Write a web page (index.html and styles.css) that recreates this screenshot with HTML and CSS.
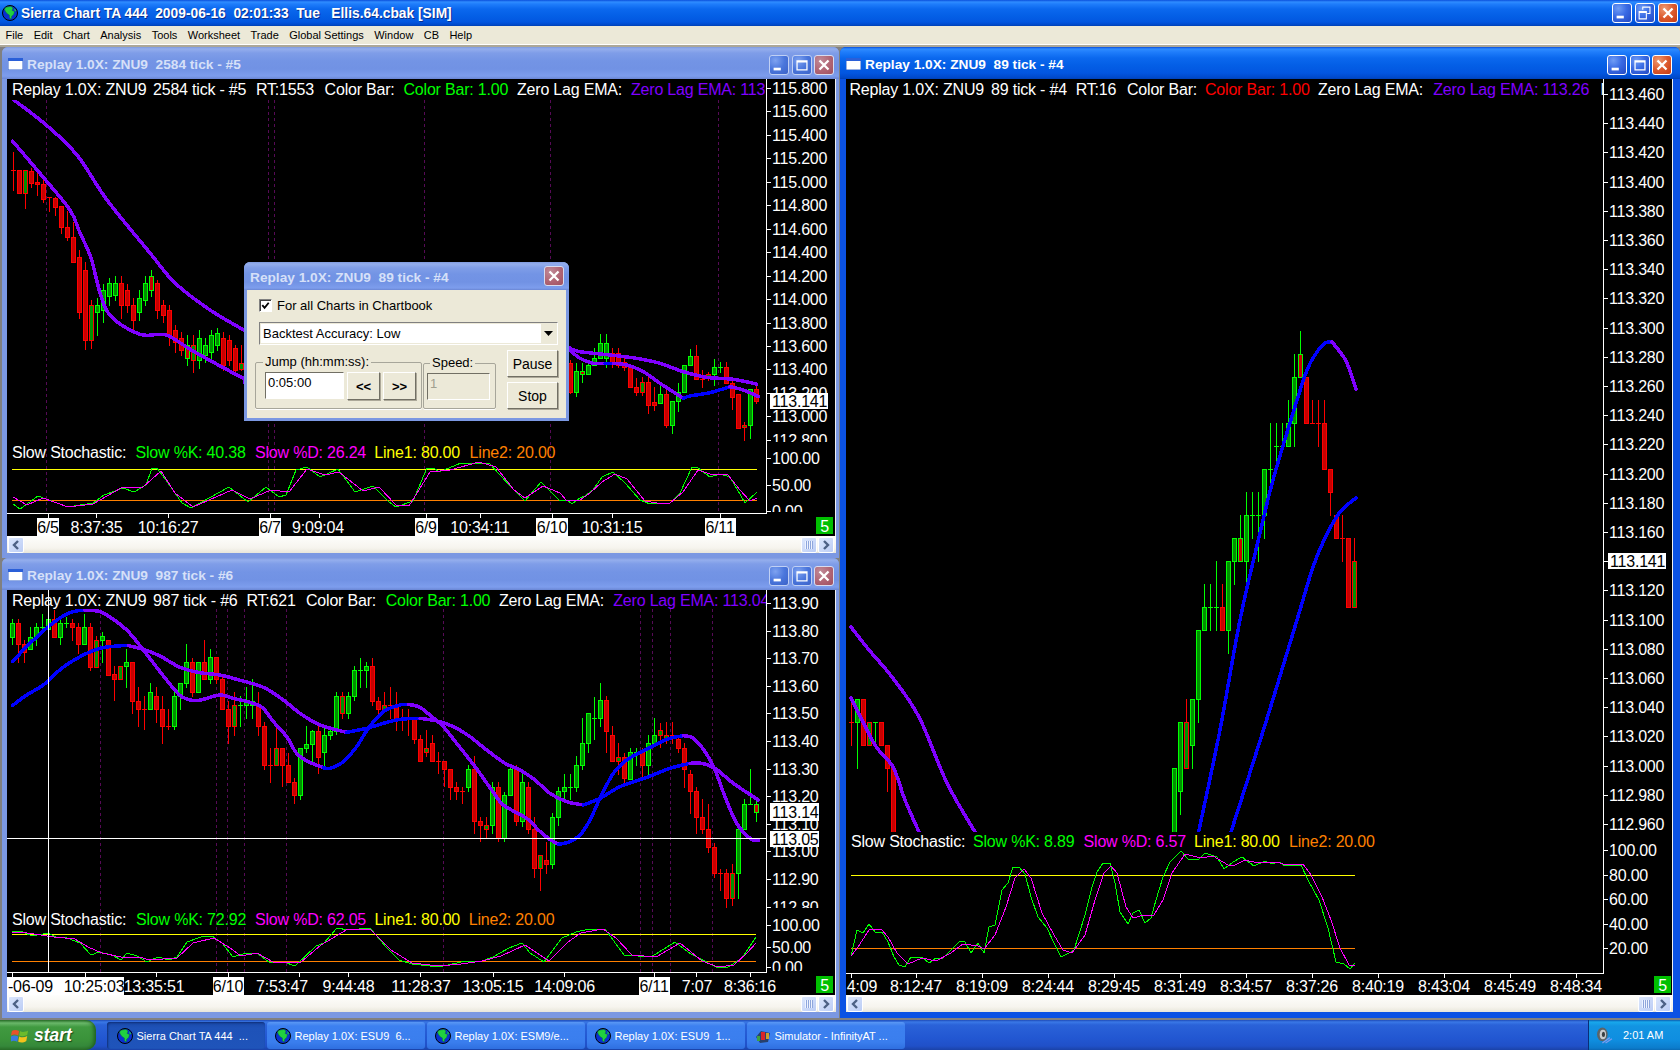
FILE: index.html
```html
<!DOCTYPE html>
<html lang="en">
<head>
<meta charset="utf-8">
<title>Sierra Chart TA 444</title>
<link rel="stylesheet" href="styles.css">
</head>
<body>
<svg class="defs" width="0" height="0" aria-hidden="true">
  <defs>
    <symbol id="globe" viewBox="0 0 16 16">
      <circle cx="8" cy="8" r="7.5" fill="#0a2fd0" stroke="#000" stroke-width="1"/>
      <path d="M4 2.2 9 1.4 11 3 10 5.5 12.5 6.5 11.6 9.4 9.6 11.2 9.2 14 7.6 13 7.4 10 5 8.6 3.2 6 2.6 4Z" fill="#20d040" stroke="#0a7a20" stroke-width=".4"/>
      <path d="M12.5 3.4 14.2 5.6 13.4 6.4 12.2 5Z" fill="#20d040"/>
    </symbol>
    <symbol id="minimize" viewBox="0 0 20 20"><rect x="4" y="13" width="8" height="3" fill="#fff"/></symbol>
    <symbol id="maximize" viewBox="0 0 20 20"><path d="M4.5 5.5h11v10h-11zM4.5 6.5h11" fill="none" stroke="#fff" stroke-width="1.4"/></symbol>
    <symbol id="restore" viewBox="0 0 20 20"><path d="M7.5 6.5V3.5h8v7h-3M3.5 8.5h8v8h-8zM3.5 9.5h8" fill="none" stroke="#fff" stroke-width="1.2"/></symbol>
    <symbol id="close" viewBox="0 0 20 20"><path d="M5 5 15 15M15 5 5 15" stroke="#fff" stroke-width="2.6" fill="none"/></symbol>
    <symbol id="docicon" viewBox="0 0 15 12"><rect width="15" height="12" fill="#fff" stroke="#3060c8"/><rect width="15" height="3" fill="#2a5fd8"/></symbol>
    <symbol id="chev-l" viewBox="0 0 14 14"><path d="M9 3 5 7 9 11" fill="none" stroke="#4d6185" stroke-width="2.4"/></symbol>
    <symbol id="chev-r" viewBox="0 0 14 14"><path d="M5 3 9 7 5 11" fill="none" stroke="#4d6185" stroke-width="2.4"/></symbol>
    <symbol id="grip" viewBox="0 0 14 14"><path d="M3.500 3v8M5.500 3v8M7.500 3v8M9.500 3v8" stroke="#eef3ff" stroke-width="1"/><path d="M4.500 3v8M6.500 3v8M8.500 3v8M10.500 3v8" stroke="#8ea6dc" stroke-width="1"/></symbol>
  </defs>
</svg>

<div class="desktop">
  <header class="apptitle">
    <svg class="appicon"><use href="#globe"/></svg>
    <span class="apptitle-text">Sierra Chart TA 444  2009-06-16  02:01:33  Tue   Ellis.64.cbak [SIM]</span>
    <div class="btns btns-app">
      <span class="xb"><svg><use href="#minimize"/></svg></span>
      <span class="xb"><svg><use href="#restore"/></svg></span>
      <span class="xb xb-close"><svg><use href="#close"/></svg></span>
    </div>
  </header>

  <nav class="menu">
    <span>File</span><span>Edit</span><span>Chart</span><span>Analysis</span><span>Tools</span><span>Worksheet</span><span>Trade</span><span>Global Settings</span><span>Window</span><span>CB</span><span>Help</span>
  </nav>

  <main class="mdi">
    <div class="leftcol">
      <section class="win win-a">
        <div class="wintitle">
          <svg class="docicon"><use href="#docicon"/></svg>
          <span class="wintitle-text">Replay 1.0X: ZNU9  2584 tick - #5</span>
          <div class="btns btns-win">
            <span class="xb"><svg><use href="#minimize"/></svg></span>
            <span class="xb"><svg><use href="#maximize"/></svg></span>
            <span class="xb xb-close"><svg><use href="#close"/></svg></span>
          </div>
        </div>
        <div class="chartwrap">
          <svg id="c1" class="chart chart-a" viewBox="7 79 828 457">
            <g class="plot"></g>
            <text class="t w" x="12" y="95">Replay 1.0X: ZNU9</text>
            <text class="t w" x="153" y="95">2584 tick - #5</text>
            <text class="t w" x="256" y="95">RT:1553</text>
            <text class="t w" x="324.600" y="95">Color Bar:</text>
            <text class="t gr" x="403.500" y="95">Color Bar: 1.00</text>
            <text class="t w" x="517" y="95">Zero Lag EMA:</text>
            <text class="t pu hdrclip" x="631" y="95">Zero Lag EMA: 113.14</text>
            <text class="t w" x="12" y="458">Slow Stochastic:</text>
            <text class="t gr" x="135.500" y="458">Slow %K: 40.38</text>
            <text class="t ma" x="255" y="458">Slow %D: 26.24</text>
            <text class="t ye" x="374.300" y="458">Line1: 80.00</text>
            <text class="t or" x="469.600" y="458">Line2: 20.00</text>
            <g class="axis"></g>
          </svg>
        </div>
        <div class="sbar">
          <span class="sb"><svg><use href="#chev-l"/></svg></span>
          <span class="sb-right"><span class="sb"><svg><use href="#grip"/></svg></span><span class="sb"><svg><use href="#chev-r"/></svg></span></span>
        </div>
      </section>

      <section class="win win-b">
        <div class="wintitle">
          <svg class="docicon"><use href="#docicon"/></svg>
          <span class="wintitle-text">Replay 1.0X: ZNU9  987 tick - #6</span>
          <div class="btns btns-win">
            <span class="xb"><svg><use href="#minimize"/></svg></span>
            <span class="xb"><svg><use href="#maximize"/></svg></span>
            <span class="xb xb-close"><svg><use href="#close"/></svg></span>
          </div>
        </div>
        <div class="chartwrap">
          <svg id="c2" class="chart chart-b" viewBox="7 590 828 405">
            <g class="plot"></g>
            <text class="t w" x="12" y="606">Replay 1.0X: ZNU9</text>
            <text class="t w" x="153" y="606">987 tick - #6</text>
            <text class="t w" x="246.400" y="606">RT:621</text>
            <text class="t w" x="306" y="606">Color Bar:</text>
            <text class="t gr" x="385.700" y="606">Color Bar: 1.00</text>
            <text class="t w" x="499" y="606">Zero Lag EMA:</text>
            <text class="t pu hdrclip" x="613.300" y="606">Zero Lag EMA: 113.04</text>
            <text class="t w" x="12" y="925">Slow Stochastic:</text>
            <text class="t gr" x="136" y="925">Slow %K: 72.92</text>
            <text class="t ma" x="255" y="925">Slow %D: 62.05</text>
            <text class="t ye" x="374.400" y="925">Line1: 80.00</text>
            <text class="t or" x="468.700" y="925">Line2: 20.00</text>
            <g class="axis"></g>
          </svg>
        </div>
        <div class="sbar">
          <span class="sb"><svg><use href="#chev-l"/></svg></span>
          <span class="sb-right"><span class="sb"><svg><use href="#grip"/></svg></span><span class="sb"><svg><use href="#chev-r"/></svg></span></span>
        </div>
      </section>
    </div>

    <section class="win win-c is-active">
      <div class="wintitle">
        <svg class="docicon"><use href="#docicon"/></svg>
        <span class="wintitle-text">Replay 1.0X: ZNU9  89 tick - #4</span>
        <div class="btns btns-win">
          <span class="xb"><svg><use href="#minimize"/></svg></span>
          <span class="xb"><svg><use href="#maximize"/></svg></span>
          <span class="xb xb-close"><svg><use href="#close"/></svg></span>
        </div>
      </div>
      <div class="chartwrap">
        <svg id="c3" class="chart chart-c" viewBox="846 79 826 916">
          <g class="plot"></g>
          <text class="t w" x="849.500" y="95">Replay 1.0X: ZNU9</text>
          <text class="t w" x="991" y="95">89 tick - #4</text>
          <text class="t w" x="1075.700" y="95">RT:16</text>
          <text class="t w" x="1127" y="95">Color Bar:</text>
          <text class="t re" x="1205" y="95">Color Bar: 1.00</text>
          <text class="t w" x="1318" y="95">Zero Lag EMA:</text>
          <text class="t pu" x="1433.300" y="95">Zero Lag EMA: 113.26</text>
          <text class="t w hdrclip" x="1600.500" y="95">M</text>
          <text class="t w" x="851" y="847">Slow Stochastic:</text>
          <text class="t gr" x="973" y="847">Slow %K: 8.89</text>
          <text class="t ma" x="1083.600" y="847">Slow %D: 6.57</text>
          <text class="t ye" x="1194" y="847">Line1: 80.00</text>
          <text class="t or" x="1289" y="847">Line2: 20.00</text>
          <g class="axis"></g>
        </svg>
      </div>
      <div class="sbar">
        <span class="sb"><svg><use href="#chev-l"/></svg></span>
        <span class="sb-right"><span class="sb"><svg><use href="#grip"/></svg></span><span class="sb"><svg><use href="#chev-r"/></svg></span></span>
      </div>
    </section>
  </main>

  <footer class="taskbar">
    <div class="start">
      <svg class="flag" viewBox="0 0 20 18">
        <path d="M1 4C3 2.500 6 2.500 9 4L8 9C5 7.500 3 7.500 0 9Z" fill="#e8522a"/>
        <path d="M10 4C12 5.500 15 5.500 19 3.500L18 8.500C15 10 12 10 9 9Z" fill="#6cbb2c"/>
        <path d="M0 10C3 8.500 5 8.500 8 10L7 16C4 14.500 2 14.500 -1 16Z" fill="#3a7ae0"/>
        <path d="M9 10C12 11.500 15 11.500 18 9.500L17 15C14 17 11 17 8 16Z" fill="#f4c21c"/>
      </svg>
      <span class="start-text">start</span>
    </div>
    <div class="tasks">
      <div class="task is-on"><svg class="taskicon"><use href="#globe"/></svg><span>Sierra Chart TA 444  ...</span></div>
      <div class="task"><svg class="taskicon"><use href="#globe"/></svg><span>Replay 1.0X: ESU9  6...</span></div>
      <div class="task"><svg class="taskicon"><use href="#globe"/></svg><span>Replay 1.0X: ESM9/e...</span></div>
      <div class="task"><svg class="taskicon"><use href="#globe"/></svg><span>Replay 1.0X: ESU9  1...</span></div>
      <div class="task">
        <svg class="taskicon" viewBox="0 0 16 16">
          <path d="M1 9 6 3l9 2-2 9-8 1Z" fill="#27406e"/>
          <path d="M6 4h4v8H6Z" fill="#d8242a"/>
          <path d="M2 8h3v5H2Z" fill="#3ca040"/>
          <path d="M11 5h3v6h-3Z" fill="#c8a030"/>
        </svg>
        <span>Simulator - InfinityAT ...</span>
      </div>
    </div>
    <div class="tray">
      <svg class="speaker" viewBox="0 0 16 16">
        <ellipse cx="6" cy="7" rx="5" ry="6.500" fill="#5c6468"/>
        <ellipse cx="6.500" cy="7" rx="3" ry="4.500" fill="#c8ccd0"/>
        <ellipse cx="7" cy="7" rx="1.500" ry="2.500" fill="#3a4044"/>
        <path d="M6 15 13 10M9 15 15 11" stroke="#7c9cf0" stroke-width="1.200" fill="none"/>
      </svg>
      <span class="clock">2:01 AM</span>
    </div>
  </footer>

  <aside class="dialog">
    <div class="dlg-title">
      <span class="dlg-title-text">Replay 1.0X: ZNU9  89 tick - #4</span>
      <span class="xb xb-close"><svg><use href="#close"/></svg></span>
    </div>
    <div class="dlg-body">
      <div class="dlg-check">
        <span class="checkbox"><svg viewBox="0 0 12 12"><path d="M2.500 5.500 5 8.500 9.500 3" fill="none" stroke="#000" stroke-width="2"/></svg></span>
        <span>For all Charts in Chartbook</span>
      </div>
      <div class="dlg-select">
        <span class="dlg-select-text">Backtest Accuracy: Low</span>
        <span class="dlg-arrow"><svg viewBox="0 0 9 5"><path d="M0 0h9L4.500 5Z" fill="#000"/></svg></span>
      </div>
      <div class="dlg-row">
        <fieldset class="grp grp-jump">
          <legend>Jump (hh:mm:ss):</legend>
          <div class="field">0:05:00</div>
          <button class="btn btn-nav">&lt;&lt;</button>
          <button class="btn btn-nav">&gt;&gt;</button>
        </fieldset>
        <fieldset class="grp grp-speed">
          <legend>Speed:</legend>
          <div class="field field-off">1</div>
        </fieldset>
        <div class="dlg-actions">
          <button class="btn btn-act">Pause</button>
          <button class="btn btn-act">Stop</button>
        </div>
      </div>
    </div>
  </aside>
</div>
<script src="chart.js"></script>
</body>
</html>
```
FILE: styles.css
```css
* { box-sizing: border-box; }
html, body { margin: 0; padding: 0; background: #808080; }
body { font-family: "Liberation Sans", Arial, sans-serif; overflow: hidden; }
.defs { position: absolute; }

.desktop { position: relative; width: 1680px; height: 1050px; display: flex; flex-direction: column; overflow: hidden; }

/* ---------- XP caption ---------- */
.apptitle {
  height: 26px; flex: none; display: flex; align-items: center; padding: 0 2px;
  background: linear-gradient(#0a4fdc 0, #2f8cff 2px, #1f7dfb 4px, #0b68ee 9px, #045fe6 16px, #0256e0 22px, #0048c8 25px, #0040b0 26px);
}
.appicon { width: 16px; height: 16px; flex: none; }
.apptitle-text { margin-left: 3px; color: #fff; font-weight: bold; font-size: 13.800px; white-space: pre; text-shadow: 1px 1px 0 #0a2f90; }
.btns { margin-left: auto; display: flex; }
.btns-app { gap: 3px; }
.btns-win { gap: 2.500px; margin-top: 3px; padding-right: 5px; }
.xb {
  width: 20px; height: 20px; display: block; border: 1px solid #fff; border-radius: 3px; flex: none;
  background: radial-gradient(circle at 30% 25%, #6f9cf5 0, #3a6be4 45%, #2349c4 100%);
}
.xb svg { display: block; width: 100%; height: 100%; }
.xb-close { background: radial-gradient(circle at 30% 25%, #ee9a72 0, #dc5a2e 50%, #c43a14 100%); }

.menu {
  height: 21px; flex: none; display: flex; align-items: center; gap: 10.400px; padding: 0 0 1px 5.500px;
  background: #ece9d8; font-size: 11px; color: #000; border-bottom: 2px solid #aca899; box-shadow: inset 0 -1px 0 #fff;
}

/* ---------- MDI ---------- */
.mdi { flex: none; height: 973px; display: flex; }
.leftcol { width: 840px; flex: none; display: flex; flex-direction: column; padding-left: 2px; }
.win { display: flex; flex-direction: column; border-radius: 6px 6px 0 0; background: #7b98e2; }
.wintitle {
  height: 32px; flex: none; display: flex; align-items: center; padding-left: 6px; border-radius: 6px 6px 0 0;
  background: linear-gradient(#7f9bdf 0, #94aeed 2px, #7f9de8 6px, #7394e5 14px, #7192e4 22px, #7d9ded 29px, #6a86d4 32px);
}
.docicon { width: 15px; height: 12px; flex: none; margin-top: 2px; }
.wintitle-text { margin: 2px 0 0 4px; color: #d6e0f8; font-weight: bold; font-size: 13.700px; white-space: pre; }
.win-a, .win-b { width: 837px; border-left: 5px solid #7b98e2; border-right: 3px solid #7b98e2; }
.win-a { height: 511px; margin-bottom: 0; }
.win-b { height: 460px; }
.win-a .wintitle, .win-b .wintitle { margin-left: -5px; margin-right: -3px; }
.win-a .btns-win, .win-b .btns-win { padding-right: 5px; }
.win-c {
  width: 840px; height: 971px; border-left: 6px solid #0b52e4; border-right: 7px solid #0b52e4; border-bottom: 6px solid #0b52e4; background: #0b52e4;
}
.win-c .wintitle {
  margin-left: -6px; margin-right: -7px;
  background: linear-gradient(#0a4fdc 0, #2f8cff 2px, #1f7dfb 5px, #0b68ee 11px, #045fe6 18px, #0256e0 26px, #0048c8 31px, #0040b0 32px);
}
.win-c .wintitle-text { color: #fff; }
.win-c .btns-win { padding-right: 8px; gap: 2.500px; }
.win-c .wintitle, .win-a .wintitle, .win-b .wintitle { position: relative; }

.win-a .xb, .win-b .xb { background: radial-gradient(circle at 30% 25%, #7ea2f0 0, #4a76dc 50%, #3c62c8 100%); border-color: #c0d0f4; }
.win-a .xb-close, .win-b .xb-close, .dialog .xb-close { background: radial-gradient(circle at 30% 25%, #c08a98 0, #b06474 55%, #a0505f 100%); border-color: #d8dcf0; }

.chartwrap { flex: none; background: #000; border-right: 1px solid #f0f0f0; }
.chart { display: block; background: #000; }
.chart-a { width: 828px; height: 457px; }
.chart-b { width: 828px; height: 405px; }
.chart-c { width: 826px; height: 916px; }

.sbar {
  height: 17px; flex: none; display: flex; justify-content: space-between; align-items: center; padding: 0 2px 0 1px;
  background: linear-gradient(#fefefc, #f6f4ee 70%, #e8e6da);
}
.sb-right { display: flex; gap: 1px; }
.sb { width: 16px; height: 16px; display: block; border: 1px solid #fff; border-radius: 2px; background: linear-gradient(135deg, #dbe6fc, #bccdf5); }
.sb svg { display: block; width: 100%; height: 100%; }

/* ---------- chart drawing ---------- */
.plot, .axis line, .axis rect { shape-rendering: crispEdges; }
.t { font-family: "Liberation Sans", Arial, sans-serif; font-size: 16px; letter-spacing: -.2px; white-space: pre; }
.w { fill: #fff; } .gr { fill: #00ff00; } .re { fill: #ff0000; } .pu { fill: #8000ff; } .ma { fill: #ff00ff; } .ye { fill: #ffff00; } .or { fill: #ff8000; } .k { fill: #000; }
.mid { text-anchor: middle; }
.vd { stroke: #560a56; stroke-width: 1; stroke-dasharray: 3 3; }
.ax { stroke: #fff; stroke-width: 1; }
.bx { fill: #fff; }
.badge { fill: #00c000; }
.cs-g { stroke: #00ff00; } .cs-r { stroke: #ff0000; }
.cf-g { fill: #009000; } .cf-r { fill: #c80000; }
.ma-p, .ma-b { fill: none; stroke-width: 3.500; stroke-linecap: round; stroke-linejoin: round; }
.ma-p { stroke: #8000ff; } .ma-b { stroke: #0000ff; }
.st-g, .st-m { fill: none; stroke-width: 1; }
.st-g { stroke: #00ff00; } .st-m { stroke: #ff00ff; }
.lvl-y { stroke: #ffff00; } .lvl-o { stroke: #ff8000; }
.xh { stroke: #fff; stroke-width: 1; }

/* ---------- taskbar ---------- */
.taskbar {
  height: 30px; flex: none; display: flex; align-items: stretch;
  background: linear-gradient(#1f4bb8 0, #3a78e6 2px, #2a62d8 5px, #2257d2 18px, #2050c8 26px, #1a42a8 30px);
}
.start {
  width: 96px; flex: none; display: flex; align-items: center; padding-left: 11px; gap: 5px; border-radius: 0 10px 10px 0;
  background: linear-gradient(#2a702a 0, #6ab86a 3px, #409a40 7px, #3a923a 20px, #35883a 26px, #2a702a 30px);
  box-shadow: inset -4px 0 4px -2px #1c5a1c;
}
.flag { width: 18px; height: 17px; flex: none; }
.start-text { color: #fff; font-style: italic; font-weight: bold; font-size: 17.500px; text-shadow: 1px 1px 1px #1a4a1a; }
.tasks { display: flex; gap: 2px; margin-left: 10.500px; }
.task {
  width: 158px; margin: 2px 0 1px; display: flex; align-items: center; padding-left: 8px; gap: 4px; border-radius: 3px;
  color: #fff; font-size: 11px; white-space: pre;
  background: linear-gradient(#5a98f4 0, #3c80f0 4px, #3a7eee 20px, #2f6fe0 27px);
}
.task.is-on { padding-left: 10px; background: linear-gradient(#1a48a8, #1e52b8 6px, #1f54ba); box-shadow: inset 1px 1px 2px #0f2f78; }
.taskicon { width: 16px; height: 16px; flex: none; }
.tray {
  margin-left: auto; width: 92px; flex: none; display: flex; align-items: center; padding-left: 7px; gap: 10px;
  border-left: 1px solid #092e78; color: #fff; font-size: 11px;
  background: linear-gradient(#0c5eb0 0, #18a8ec 2px, #1294e2 6px, #0f8ee0 20px, #0c7ccc 28px, #0a6ab4 30px);
}
.speaker { width: 17px; height: 17px; flex: none; }

/* ---------- replay dialog (floats above the charts) ---------- */
.dialog {
  position: absolute; left: 244px; top: 262px; width: 325px; height: 159px; display: flex; flex-direction: column;
  border: 3px solid #7b98e2; border-top: 0; border-radius: 6px 6px 0 0; background: #ece9d8; color: #000; font-size: 13px;
}
.dlg-title {
  height: 28px; margin: 0 -3px; flex: none; display: flex; align-items: center; justify-content: space-between; padding: 0 5px 0 6px; border-radius: 6px 6px 0 0;
  background: linear-gradient(#7f9bdf 0, #94aeed 2px, #7f9de8 6px, #7394e5 12px, #7192e4 20px, #7d9ded 26px, #6a86d4 28px);
}
.dlg-title-text { margin-top: 2px; color: #d6e0f8; font-weight: bold; font-size: 13.700px; white-space: pre; }
.dlg-body { flex: 1; padding: 9px 8px 0 12px; display: flex; flex-direction: column; }
.dlg-check { display: flex; align-items: center; height: 13px; gap: 5px; }
.checkbox { width: 13px; height: 13px; display: block; background: #fff; border: 1px solid; border-color: #808080 #fff #fff #808080; box-shadow: inset 1px 1px 0 #404040; }
.checkbox svg { display: block; width: 11px; height: 11px; }
.dlg-select {
  margin-top: 10px; height: 23px; display: flex; align-items: center; justify-content: space-between; background: #fff; padding-left: 3px;
  border: 1px solid; border-color: #808080 #fff #fff #808080; outline: 1px solid #ece9d8; outline-offset: -2px;
}
.dlg-select-text { font-size: 13px; }
.dlg-arrow { width: 17px; height: 21px; display: flex; align-items: center; justify-content: center; background: #ece9d8; border: 1px solid; border-color: #fff #716f64 #716f64 #fff; }
.dlg-arrow svg { width: 9px; height: 5px; }
.dlg-row { margin: 5px 0 0 -4px; display: flex; align-items: flex-end; }
.grp { margin: 0; padding: 2px 5px 8px 9px; border: 1px solid #a7a69a; border-radius: 2px; display: flex; align-items: flex-start; box-shadow: 0 1px 0 #fff; }
.grp legend { padding: 0 2px; margin-left: -2px; font-size: 13px; line-height: 16px; color: #000; }
.grp-jump { width: 167px; gap: 3px; }
.grp-speed { width: 74px; margin-left: 1px; padding-left: 3px; }
.grp-speed legend { margin-left: 3px; }
.field { width: 79px; height: 27px; padding: 2px 2px; background: #fff; font-size: 13px; border: 1px solid; border-color: #716f64 #fff #fff #716f64; }
.field-off { width: 63px; background: #ece9d8; color: #a0a090; }
.btn { margin: 0; padding: 0; font-family: "Liberation Sans", Arial, sans-serif; font-size: 13px; color: #000; background: #ece9d8; border: 1px solid; border-color: #fff #716f64 #716f64 #fff; box-shadow: 1px 1px 0 #aca899; cursor: default; }
.btn-nav { width: 33px; height: 28px; font-weight: bold; }
.dlg-actions { margin-left: 11px; display: flex; flex-direction: column; gap: 5px; }
.btn-act { width: 51px; height: 27px; font-size: 14px; }
```
FILE: chart.js
```js
const NS = "http://www.w3.org/2000/svg";
function el(p, n, a, txt) {
  const e = document.createElementNS(NS, n);
  for (const k in a) e.setAttribute(k, a[k]);
  if (txt !== undefined) e.textContent = txt;
  p.appendChild(e);
  return e;
}
function line(p, x1, y1, x2, y2, cls) { return el(p, "line", { x1, y1, x2, y2, class: cls }); }
function clip(svg, id, x, y, w, h) {
  const c = el(svg, "clipPath", { id });
  el(c, "rect", { x, y, width: w, height: h });
  return "url(#" + id + ")";
}
function smooth(pts) {
  let d = "M" + pts[0][0] + " " + pts[0][1];
  for (let i = 0; i < pts.length - 1; i++) {
    const p0 = pts[i - 1] || pts[i], p1 = pts[i], p2 = pts[i + 1], p3 = pts[i + 2] || p2;
    d += "C" + (p1[0] + (p2[0] - p0[0]) / 6) + " " + (p1[1] + (p2[1] - p0[1]) / 6) + " " +
      (p2[0] - (p3[0] - p1[0]) / 6) + " " + (p2[1] - (p3[1] - p1[1]) / 6) + " " + p2[0] + " " + p2[1];
  }
  return d;
}
function curve(g, pts, cls) { el(g, "path", { d: smooth(pts), class: cls }); }
function poly(g, pts, cls) { el(g, "polyline", { points: pts.map(p => p.join(",")).join(" "), class: cls }); }

/* type: G green, R red, r red outline with green body, g green outline with red body */
function candle(g, x, c) {
  const type = c[0], top = c[1], bot = c[2];
  const wt = c[3] === undefined ? top : c[3], wb = c[4] === undefined ? bot : c[4];
  const out = (type === "G" || type === "g") ? "cs-g" : "cs-r";
  const fill = (type === "G" || type === "r") ? "cf-g" : "cf-r";
  const X = Math.round(x), Y0 = Math.round(top), Y1 = Math.round(bot);
  if (Math.round(wt) !== Math.round(wb)) line(g, X + .5, Math.round(wt), X + .5, Math.round(wb) + 1, out);
  if (Y0 === Y1) line(g, X - 2, Y0 + .5, X + 3, Y0 + .5, out);
  else el(g, "rect", { x: X - 1.5, y: Y0 + .5, width: 4, height: Y1 - Y0, class: out + " " + fill });
}

function axis(svg, g, o) {
  o.prices.forEach(p => {
    line(g, o.ax + 1, p[0] + .5, o.ax + 5, p[0] + .5, "ax");
  });
  const gp = el(g, "g", { "clip-path": clip(svg, svg.id + "pl", o.ax, o.top, 70, o.splitY - o.top) });
  o.prices.forEach(p => el(gp, "text", { x: o.lx, y: p[0] + 6, class: "t w" }, p[1]));
  const gs = el(g, "g", { "clip-path": clip(svg, svg.id + "sl", o.ax, o.splitY, 70, o.axisY - o.splitY - 1) });
  o.stoch.forEach(p => {
    el(gs, "text", { x: o.lx, y: p[0] + 6, class: "t w" }, p[1]);
    line(g, o.ax + 1, p[0] + .5, o.ax + 5, p[0] + .5, "ax");
  });
  line(g, o.ax + .5, o.top, o.ax + .5, o.axisY + 1, "ax");
  line(g, o.left, o.axisY + .5, o.ax + 1, o.axisY + .5, "ax");
  o.ticks.forEach(x => line(g, x + .5, o.axisY, x + .5, o.axisY + 5, "ax"));
  o.times.forEach(t => {
    if (t[2]) {
      el(g, "rect", { x: t[2], y: o.axisY + 5, width: t[3] - t[2], height: o.bottom - o.axisY - 5, class: "bx" });
      el(g, "text", { x: t[0], y: o.labelY, class: "t k mid" }, t[1]);
    } else el(g, "text", { x: t[0], y: o.labelY, class: "t w mid" }, t[1]);
  });
  (o.boxes || []).forEach(b => {
    el(g, "rect", { x: b[0], y: b[1], width: b[2], height: b[3], class: "bx" });
    el(g, "text", { x: b[0] + 2, y: b[1] + b[3] / 2 + 6, class: "t k" }, b[4]);
  });
  el(g, "rect", { x: o.badge[0], y: o.badge[1], width: 17, height: 17, class: "badge" });
  el(g, "text", { x: o.badge[0] + 8.5, y: o.badge[1] + 14.500, class: "t w mid" }, "5");
}
function labelRun(y0, step, start, delta, n, digits) {
  const r = [];
  for (let i = 0; i < n; i++) r.push([Math.round(y0 + step * i), (start - delta * i).toFixed(digits)]);
  return r;
}

/* ========== chart 1 : 2584 tick ========== */
(function () {
  const svg = document.getElementById("c1");
  const plot = svg.querySelector(".plot"), ax = svg.querySelector(".axis");
  const hdr = clip(svg, "c1h", 7, 79, 759, 30);
  svg.querySelectorAll(".hdrclip").forEach(t => t.setAttribute("clip-path", hdr));
  const mc = clip(svg, "c1m", 7, 100, 759, 341);
  const sc = clip(svg, "c1s", 7, 441, 759, 72);
  [46, 268, 274, 424, 550, 718].forEach(x => line(plot, x + .5, 100, x + .5, 513, "vd"));
  const gm = el(plot, "g", { "clip-path": mc });
  const left = [
    ["R", 170, 170, 152, 190], ["R", 170, 193], ["r", 170, 193, 170, 208], ["R", 171, 183, 168, 187], ["R", 182, 184, 173, 195],
    ["R", 184, 199, 180, 202], ["R", 197, 197, 197, 211], ["R", 198, 207, 197, 215], ["R", 206, 227, 206, 233], ["R", 227, 237, 211, 240],
    ["R", 237, 262, 222, 262], ["R", 257, 312, 250, 318], ["R", 270, 340, 262, 349], ["r", 305, 340, 300, 348], ["G", 305, 312, 298, 335],
    ["G", 290, 310, 284, 322], ["G", 283, 296, 278, 305], ["G", 283, 295, 276, 300], ["R", 283, 305, 276, 318], ["R", 290, 305, 284, 312],
    ["R", 305, 320, 298, 330], ["G", 298, 312, 290, 320], ["G", 283, 300, 276, 305], ["g", 276, 290, 270, 296], ["R", 283, 310, 280, 318],
    ["R", 305, 315, 300, 322], ["R", 310, 335, 305, 345], ["R", 330, 342, 325, 352], ["R", 338, 350, 332, 355], ["g", 345, 358, 335, 365],
    ["r", 345, 360, 335, 372], ["G", 338, 360, 330, 368], ["G", 345, 355, 338, 362], ["G", 335, 352, 330, 358], ["G", 333, 345, 328, 350],
    ["R", 338, 365, 332, 370], ["R", 340, 360, 335, 365], ["R", 348, 370, 345, 372], ["r", 363, 369, 345, 370]
  ];
  left.forEach((c, i) => candle(gm, 12.9 + 6 * i, c));
  const z = v => 330 + v / 3;
  const right = [
    ["R", 100, 185, 90, 190], ["G", 122, 185, 100, 197], ["g", 122, 133, 98, 157], ["G", 106, 133, 98, 133], ["G", 85, 106, 55, 106], ["G", 40, 85, 12, 85], ["G", 40, 85, 12, 110],
    ["R", 68, 100, 55, 110], ["R", 68, 106, 55, 112], ["R", 95, 112, 75, 120], ["R", 112, 172, 112, 172], ["R", 172, 185, 145, 195], ["r", 155, 185, 140, 195],
    ["R", 155, 225, 140, 248], ["R", 216, 226, 172, 240], ["G", 192, 218, 165, 218], ["R", 192, 285, 165, 290], ["G", 212, 285, 212, 308], ["G", 185, 212, 158, 242],
    ["G", 106, 185, 106, 185], ["G", 78, 106, 58, 106], ["R", 78, 146, 45, 146], ["R", 146, 146, 120, 170], ["r", 133, 140, 125, 150], ["G", 112, 133, 88, 165],
    ["G", 112, 112, 95, 125], ["R", 112, 160, 95, 160], ["R", 160, 200, 150, 236], ["R", 192, 293, 192, 293], ["r", 284, 292, 276, 330], ["G", 178, 284, 178, 324], ["R", 178, 212, 155, 218]
  ];
  right.forEach((c, i) => candle(gm, 570 + 6 * i, [c[0], z(c[1]), z(c[2]), z(c[3]), z(c[4])]));
  const zp = a => [560 + a[0] / 3, 330 + a[1] / 3];
  curve(gm, [[12.5, 99], [45, 124], [77, 155], [107, 200], [150, 253], [175, 283], [210, 310], [244, 330], [260, 338], [400, 340], [570, 348]], "ma-p");
  curve(gm, [[12.5, 141], [43, 177], [70, 210], [80, 233], [91, 258], [107, 311], [139, 334], [166, 335], [193, 351], [241, 377], [260, 385], [400, 380], [540, 345], [570, 348]], "ma-p");
  curve(gm, [[30, 55], [60, 65], [150, 75], [230, 85], [300, 100], [370, 125], [440, 142], [520, 148], [590, 162]].map(zp), "ma-p");
  curve(gm, [[30, 60], [60, 85], [100, 100], [135, 100]].map(zp), "ma-p");
  curve(gm, [[135, 100], [160, 100]].map(zp), "ma-b");
  curve(gm, [[160, 100], [200, 105], [250, 125], [300, 160], [370, 205]].map(zp), "ma-p");
  curve(gm, [[370, 205], [390, 198], [450, 188], [510, 170]].map(zp), "ma-b");
  curve(gm, [[510, 170], [550, 180], [595, 200]].map(zp), "ma-p");
  const gs = el(plot, "g", { "clip-path": sc });
  line(gs, 12, 469.5, 757, 469.5, "lvl-y");
  line(gs, 12, 500.5, 757, 500.5, "lvl-o");
  const s3 = a => [Math.round(a[0] / 2.8), Math.round(430 + a[1] / 3)];
  const s4 = a => [Math.round(560 + a[0] / 3), Math.round(330 + a[1] / 3)];
  poly(gs, [[35, 222], [55, 238], [105, 197], [130, 208], [190, 230], [260, 220], [290, 195], [345, 173], [375, 185], [410, 165], [425, 115], [440, 115], [470, 160], [510, 220], [535, 235], [640, 170], [695, 217], [745, 170], [780, 200], [800, 195], [830, 120], [860, 110], [895, 142], [945, 118], [995, 187], [1045, 167], [1090, 215], [1110, 232], [1155, 212], [1195, 113], [1215, 113], [1230, 127], [1290, 98], [1370, 98], [1430, 170], [1470, 213], [1515, 155], [1568, 212]].map(s3)
    .concat([[20, 510], [35, 522], [60, 505], [75, 497], [100, 480], [125, 440], [160, 427], [195, 460], [240, 510], [270, 522], [330, 518], [360, 490], [395, 412], [415, 415], [450, 440], [480, 432], [510, 440], [555, 518], [590, 485]].map(s4)), "st-g");
  poly(gs, [[35, 200], [75, 225], [120, 205], [190, 230], [260, 222], [340, 175], [400, 172], [450, 123], [490, 190], [540, 232], [650, 180], [700, 208], [760, 180], [810, 185], [860, 118], [910, 135], [950, 125], [1015, 182], [1060, 172], [1110, 225], [1145, 228], [1205, 125], [1260, 120], [1340, 95], [1390, 110], [1440, 180], [1470, 205], [1520, 168], [1568, 190]].map(s3)
    .concat([[20, 512], [60, 510], [90, 490], [125, 455], [165, 432], [200, 448], [255, 512], [290, 520], [330, 520], [370, 485], [415, 420], [450, 432], [505, 435], [540, 480], [570, 512], [590, 503]].map(s4)), "st-m");
  axis(svg, ax, {
    ax: 766, lx: 772, top: 79, splitY: 442, axisY: 513, left: 7, bottom: 536, labelY: 533,
    prices: labelRun(88, 23.45, 115.8, .2, 16, 3),
    stoch: [[458, "100.00"], [485, "50.00"], [511, "0.00"]],
    ticks: [48, 96, 168, 270, 319, 426, 480, 552, 612, 720],
    times: [[48, "6/5", 37, 59], [96.5, "8:37:35"], [168, "10:16:27"], [270, "6/7", 259, 281], [318, "9:09:04"], [426, "6/9", 415, 437.5], [480, "10:34:11"], [552, "6/10", 536, 568], [612, "10:31:15"], [720, "6/11", 705, 736]],
    boxes: [[770, 393, 58, 16, "113.141"]],
    badge: [816, 517]
  });
})();

/* ========== chart 2 : 987 tick ========== */
(function () {
  const svg = document.getElementById("c2");
  const plot = svg.querySelector(".plot"), ax = svg.querySelector(".axis");
  const hdr = clip(svg, "c2h", 7, 590, 759, 30);
  svg.querySelectorAll(".hdrclip").forEach(t => t.setAttribute("clip-path", hdr));
  const mc = clip(svg, "c2m", 7, 609, 759, 299);
  const sc = clip(svg, "c2s", 7, 908, 759, 64);
  [100, 216, 227, 244, 286, 443, 640, 652, 670, 712].forEach(x => line(plot, x + .5, 609, x + .5, 972, "vd"));
  const gm = el(plot, "g", { "clip-path": mc });
  const data = [
    ["G", 100, 140, 88, 162], ["R", 100, 163, 88, 215], ["R", 163, 187, 150, 215], ["G", 140, 178, 112, 178], ["G", 112, 140, 100, 165], ["G", 112, 112, 72, 130], ["G", 88, 118, 72, 130], ["R", 88, 140, 60, 140], ["G", 100, 140, 88, 162], ["G", 100, 100, 82, 112],
    ["R", 100, 112, 88, 150], ["R", 112, 163, 100, 188], ["G", 112, 163, 72, 163], ["R", 112, 230, 100, 240], ["r", 150, 230, 138, 230], ["G", 139, 151, 125, 215], ["R", 151, 254, 151, 254], ["R", 253, 268, 228, 330], ["r", 229, 268, 229, 268], ["G", 217, 229, 178, 290],
    ["R", 217, 332, 217, 370], ["R", 332, 358, 292, 408], ["R", 358, 358, 318, 418], ["G", 307, 358, 280, 358], ["R", 319, 358, 292, 396], ["R", 358, 409, 319, 458], ["R", 409, 409, 358, 418], ["G", 319, 409, 305, 418], ["G", 280, 319, 280, 356], ["G", 217, 280, 163, 292],
    ["R", 217, 307, 203, 318], ["G", 217, 307, 217, 307], ["R", 217, 268, 150, 268], ["G", 202, 268, 178, 280], ["R", 202, 268, 202, 280], ["R", 268, 358, 255, 358], ["R", 358, 409, 332, 458], ["r", 346, 409, 307, 434], ["G", 346, 346, 318, 408], ["G", 332, 346, 292, 384],
    ["G", 332, 346, 268, 384], ["R", 346, 409, 306, 434], ["R", 409, 526, 395, 536], ["R", 526, 526, 475, 575], ["r", 475, 526, 408, 526], ["R", 475, 526, 475, 587], ["R", 526, 577, 488, 577], ["R", 577, 616, 565, 640], ["G", 475, 616, 475, 626], ["G", 461, 475, 408, 486],
    ["G", 422, 461, 420, 512], ["R", 422, 500, 408, 550], ["G", 436, 487, 408, 524], ["G", 422, 436, 408, 448], ["G", 319, 422, 306, 432], ["r", 319, 370, 306, 384], ["G", 319, 370, 306, 384], ["G", 241, 319, 228, 330], ["G", 241, 241, 203, 290], ["G", 229, 241, 216, 290],
    ["R", 229, 332, 203, 344], ["R", 332, 358, 320, 370], ["r", 346, 358, 306, 358], ["R", 346, 346, 292, 384], ["R", 346, 385, 306, 420], ["R", 384, 384, 358, 420], ["R", 384, 384, 358, 434], ["R", 384, 448, 384, 460],
    ["R", 448, 512, 434, 512], ["r", 475, 487, 420, 497], ["R", 460, 514, 435, 514], ["R", 514, 514, 487, 550], ["R", 514, 538, 514, 588], ["R", 538, 590, 538, 626], ["R", 590, 604, 575, 626], ["R", 604, 604, 590, 640], ["G", 538, 590, 525, 602], ["R", 538, 694, 498, 730],
    ["R", 694, 706, 680, 754], ["r", 706, 718, 680, 745], ["G", 590, 706, 575, 730], ["R", 590, 745, 576, 754], ["G", 616, 745, 605, 754], ["G", 538, 616, 525, 616], ["R", 532, 694, 525, 705], ["G", 576, 694, 550, 708], ["R", 590, 718, 575, 730], ["R", 718, 835, 682, 860],
    ["r", 796, 835, 796, 900], ["R", 811, 823, 756, 848], ["G", 682, 823, 668, 833], ["G", 604, 682, 590, 705], ["G", 590, 604, 552, 632], ["G", 590, 590, 552, 628], ["G", 526, 590, 498, 602], ["G", 460, 526, 384, 538], ["G", 370, 460, 370, 486], ["G", 384, 384, 320, 448],
    ["G", 331, 385, 280, 408], ["R", 331, 422, 318, 486], ["R", 436, 514, 408, 514], ["r", 500, 514, 460, 552], ["R", 500, 565, 488, 576], ["G", 487, 566, 474, 566], ["G", 487, 487, 474, 526], ["R", 487, 526, 474, 565], ["G", 460, 526, 434, 552], ["G", 436, 460, 384, 460],
    ["r", 421, 435, 398, 472], ["r", 436, 448, 396, 460], ["R", 436, 436, 396, 460], ["R", 448, 475, 436, 486], ["R", 475, 538, 460, 590], ["R", 553, 604, 540, 668], ["R", 604, 682, 590, 730], ["R", 682, 718, 628, 730], ["R", 718, 772, 642, 786], ["R", 772, 850, 758, 860],
    ["R", 850, 850, 836, 900], ["R", 850, 924, 836, 950], ["r", 850, 924, 822, 945], ["G", 718, 850, 718, 924], ["G", 642, 718, 628, 718], ["G", 642, 642, 538, 642], ["g", 642, 667, 630, 692]
  ];
  data.forEach((c, i) => candle(gm, 12.33 + 6 * i, [c[0], 590 + c[1] / 3, 590 + c[2] / 3, 590 + c[3] / 3, 590 + c[4] / 3]));
  const a9 = a => [a[0] / 3, 590 + a[1] / 3], a10 = a => [420 + a[0] / 3, 590 + a[1] / 3];
  curve(gm, [[37, 215], [85, 165], [145, 110], [200, 72], [235, 62], [255, 60]].map(a9), "ma-b");
  curve(gm, [[255, 60], [300, 65], [340, 88], [385, 125], [430, 180], [480, 245], [520, 295], [545, 320], [580, 332], [610, 328], [660, 315], [700, 325], [780, 348], [820, 395], [860, 440], [890, 490], [925, 515], [970, 533]].map(a9), "ma-p");
  curve(gm, [[970, 533], [990, 535], [1030, 515], [1070, 470], [1105, 415], [1150, 365], [1200, 345], [1225, 343]].map(a9), "ma-b");
  curve(gm, [[1225, 343], [1260, 352], [1295, 380], [1330, 410], [1370, 460], [1425, 530], [1475, 600], [1510, 645], [1580, 685], [1615, 720], [1645, 745], [1675, 763]].map(p => a9([p[0], p[1]])), "ma-p");
  curve(gm, [[415, 763], [450, 755], [480, 735], [510, 690], [540, 625], [580, 550], [620, 510], [680, 478], [740, 448], [790, 437]].map(a10), "ma-b");
  curve(gm, [[790, 437], [820, 445], [855, 485], [885, 540], [915, 620], [950, 700], [990, 745], [1015, 752]].map(a10), "ma-p");
  curve(gm, [[37, 347], [80, 315], [130, 285], [185, 235], [240, 200], [300, 175], [350, 168], [385, 167]].map(a9), "ma-b");
  curve(gm, [[385, 167], [430, 178], [480, 198], [540, 232], [600, 248], [660, 255], [710, 268], [790, 292], [850, 330], [900, 370], [960, 405], [1040, 427]].map(a9), "ma-p");
  curve(gm, [[1040, 427], [1100, 415], [1150, 400], [1200, 388], [1260, 385]].map(a9), "ma-b");
  curve(gm, [[0, 385], [60, 395], [110, 415], [150, 440], [200, 480], [255, 520], [300, 540], [345, 570], [390, 610], [440, 635], [490, 645]].map(a10), "ma-p");
  curve(gm, [[490, 645], [540, 625], [600, 590], [680, 562], [750, 535], [810, 520]].map(a10), "ma-b");
  curve(gm, [[810, 520], [845, 520], [885, 535], [940, 580], [1015, 630]].map(a10), "ma-p");
  const gs = el(plot, "g", { "clip-path": sc });
  line(gs, 12, 934.5, 756, 934.5, "lvl-y");
  line(gs, 12, 961.5, 756, 961.5, "lvl-o");
  const s = a => [Math.round(a[0] / 1.867), Math.round(880 + a[1] / 3)];
  poly(gs, [[22, 153], [40, 152], [60, 168], [90, 160], [105, 172], [125, 175], [150, 190], [170, 225], [185, 215], [210, 225], [225, 240], [238, 220], [255, 228], [275, 247], [295, 232], [315, 240], [330, 230], [350, 185], [375, 172], [395, 168], [415, 190], [435, 232], [460, 218], [480, 220], [505, 250], [530, 245], [550, 258], [590, 198], [605, 190], [630, 145], [650, 150], [690, 145], [720, 200], [745, 240], [770, 252], [820, 260], [860, 245], [900, 242], [920, 230], [950, 205], [975, 190], [990, 220], [1015, 246], [1050, 175], [1075, 155], [1100, 147], [1130, 148], [1165, 225], [1215, 232], [1260, 187], [1290, 222], [1340, 265], [1360, 262], [1385, 235], [1412, 172]].map(s), "st-g");
  poly(gs, [[22, 155], [50, 160], [100, 170], [140, 178], [165, 200], [190, 220], [225, 232], [260, 230], [280, 240], [330, 235], [360, 190], [400, 175], [430, 205], [450, 228], [480, 218], [510, 245], [560, 248], [600, 195], [650, 148], [690, 147], [730, 210], [770, 248], [820, 258], [860, 252], [900, 243], [935, 228], [980, 195], [1025, 243], [1060, 185], [1085, 158], [1125, 147], [1150, 175], [1180, 225], [1225, 232], [1270, 188], [1310, 242], [1340, 262], [1370, 255], [1395, 220], [1412, 190]].map(s), "st-m");
  line(plot, 7, 838.5, 766, 838.5, "xh");
  line(plot, 48.5, 590, 48.5, 972, "xh");
  axis(svg, ax, {
    ax: 766, lx: 772, top: 590, splitY: 908, axisY: 972, left: 7, bottom: 995, labelY: 992,
    prices: labelRun(603, 27.6, 113.9, .1, 12, 2),
    stoch: [[925, "100.00"], [947, "50.00"], [967, "0.00"]],
    ticks: [12, 85, 156, 228, 299, 348, 420, 493, 564, 654, 696, 750],
    times: [[30.5, "-06-09", 7, 64], [94, "10:25:03", 64, 124], [154, "13:35:51"], [228, "6/10", 213, 244], [282, "7:53:47"], [348.5, "9:44:48"], [421, "11:28:37"], [493, "13:05:15"], [564.5, "14:09:06"], [654, "6/11", 639, 669.5], [697, "7:07"], [750, "8:36:16"]],
    boxes: [[770, 803, 49, 18, "113.14"], [770, 831, 49, 16, "113.05"]],
    badge: [816, 976]
  });
})();

/* ========== chart 3 : 89 tick ========== */
(function () {
  const svg = document.getElementById("c3");
  const plot = svg.querySelector(".plot"), ax = svg.querySelector(".axis");
  const hdr = clip(svg, "c3h", 846, 79, 757, 30);
  svg.querySelectorAll(".hdrclip").forEach(t => t.setAttribute("clip-path", hdr));
  const mc = clip(svg, "c3m", 846, 79, 757, 753);
  const sc = clip(svg, "c3s", 846, 832, 757, 141);
  const gm = el(plot, "g", { "clip-path": mc });
  const Y = n => 607.3 + 23 * n;
  const c = (t, a, b, w0, w1) => [t, Y(a), Y(b), Y(w0), Y(w1)];
  const early = [c("R", 5, 5, 4, 6), c("G", 4, 5, 4, 7), c("R", 4, 6, 4, 6), c("r", 5, 6, 5, 6), c("G", 5, 5, 5, 6), c("R", 5, 6, 5, 6), c("R", 6, 7, 6, 8), c("R", 7, 11, 7, 11)];
  early.forEach((k, i) => candle(gm, 851 + 6 * i, k));
  const rise = [
    c("G", 7, 10, 7, 10), c("G", 5, 8, 5, 9), c("r", 5, 7, 4, 7), c("G", 4, 6, 4, 7), c("G", 1, 4, 1, 5), c("G", 0, 1, -1, 1),
    c("G", 0, 0, -1, 1), c("G", 0, 0, -2, 1), c("R", 0, 1, -1, 1), c("G", -2, 1, -2, 2), c("G", -3, -2, -3, -1), c("g", -3, -2, -4, -2),
    c("G", -4, -2, -5, -1), c("G", -4, -4, -5, -3), c("G", -4, -4, -5, -2), c("G", -6, -4, -6, -3), c("G", -6, -6, -8, -5), c("G", -7, -7, -8, -6),
    c("G", -7, -7, -8, -7), c("G", -8, -7, -9, -7), c("G", -10, -8, -11, -7), c("g", -11, -10, -12, -10), c("R", -10, -8, -10, -8), c("R", -8, -8, -9, -8),
    c("R", -8, -8, -9, -7), c("R", -8, -6, -9, -6), c("R", -6, -5, -6, -4), c("R", -4, -3, -4, -3), c("R", -3, -3, -4, -2), c("R", -3, 0, -3, 0), c("r", -2, 0, -3, 0)
  ];
  rise.forEach((k, i) => candle(gm, 1174.3 + 6 * i, k));
  curve(gm, [[851, 627], [869, 650], [892, 677], [919, 717], [947, 783], [975, 832]], "ma-p");
  curve(gm, [[851, 698], [875, 745], [893, 767], [905, 800], [919, 832]], "ma-p");
  curve(gm, [[1198.6, 832], [1220, 730], [1240, 620], [1260, 533], [1273, 480], [1293, 413], [1307, 370], [1317, 352], [1325, 343], [1332, 342]], "ma-b");
  curve(gm, [[1332, 342], [1340, 352], [1347, 363], [1356, 389]], "ma-p");
  curve(gm, [[1231, 832], [1265, 725], [1297, 620], [1313, 567], [1325, 538], [1340, 512], [1356, 498]], "ma-b");
  const gs = el(plot, "g", { "clip-path": sc });
  line(gs, 851, 875.5, 1355, 875.5, "lvl-y");
  line(gs, 851, 948.5, 1355, 948.5, "lvl-o");
  const s = a => [Math.round(840 + a[0] / 2.8), Math.round(600 + a[1] / 3)];
  poly(gs, [[30, 1068], [48, 990], [65, 998], [82, 973], [98, 995], [117, 997], [133, 1025], [150, 1072], [165, 1095], [183, 1102], [200, 1072], [230, 1072], [250, 1088], [270, 1075], [285, 1076], [305, 1055], [335, 1023], [350, 1027], [368, 1060], [385, 1028], [402, 1060], [418, 982], [435, 975], [453, 870], [470, 850], [485, 800], [500, 800], [518, 822], [535, 890], [555, 950], [580, 985], [600, 1030], [620, 1072], [640, 1060], [655, 1050], [685, 945], [705, 860], [720, 815], [737, 788], [755, 788], [770, 850], [785, 935], [805, 972], [820, 940], [838, 930], [855, 968], [870, 955], [885, 900], [905, 830], [925, 785], [955, 752], [975, 778], [1005, 778], [1022, 758], [1055, 770], [1075, 808], [1100, 785], [1125, 772], [1160, 797], [1190, 782], [1210, 792], [1230, 787], [1245, 798], [1290, 795], [1310, 840], [1340, 900], [1365, 985], [1390, 1085], [1410, 1092], [1427, 1108], [1441, 1090]].map(s), "st-g");
  poly(gs, [[30, 1068], [50, 1040], [80, 990], [115, 988], [135, 1010], [160, 1060], [190, 1092], [230, 1075], [270, 1082], [310, 1060], [345, 1033], [385, 1037], [402, 1048], [435, 1005], [465, 920], [490, 835], [515, 808], [535, 835], [565, 940], [600, 1005], [625, 1050], [650, 1058], [685, 1005], [715, 900], [740, 820], [758, 797], [775, 820], [800, 920], [820, 955], [850, 945], [880, 945], [905, 900], [930, 820], [965, 762], [1010, 775], [1045, 767], [1085, 795], [1105, 795], [1135, 780], [1170, 790], [1225, 787], [1245, 795], [1295, 793], [1320, 825], [1350, 890], [1375, 960], [1400, 1045], [1425, 1095], [1441, 1097]].map(s), "st-m");
  const T = [851, 916, 982, 1048, 1114, 1180, 1246, 1312, 1378, 1444, 1510, 1576];
  const names = ["4:09", "8:12:47", "8:19:09", "8:24:44", "8:29:45", "8:31:49", "8:34:57", "8:37:26", "8:40:19", "8:43:04", "8:45:49", "8:48:34"];
  axis(svg, ax, {
    ax: 1603, lx: 1609, top: 79, splitY: 832, axisY: 973, left: 846, bottom: 995, labelY: 992,
    prices: labelRun(94, 29.2, 113.46, .02, 26, 3),
    stoch: [[850, "100.00"], [875, "80.00"], [899, "60.00"], [924, "40.00"], [948, "20.00"]],
    ticks: T,
    times: T.map((x, i) => [i === 0 ? 862 : x, names[i]]),
    boxes: [[1608, 553, 58, 16, "113.141"]],
    badge: [1654, 976]
  });
})();
```
